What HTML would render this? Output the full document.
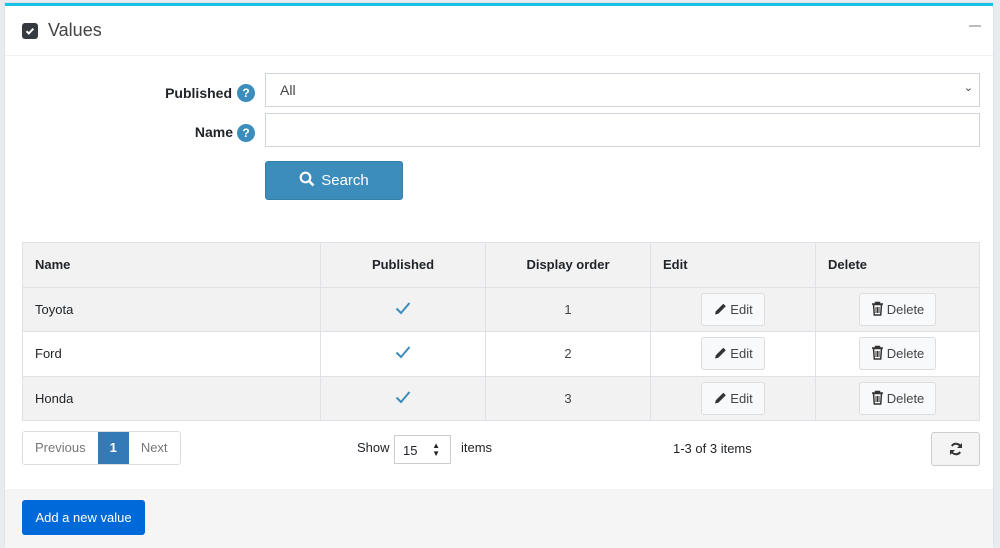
<!DOCTYPE html>
<html><head><style>
*{box-sizing:border-box;margin:0;padding:0}
body{width:1000px;height:548px;background:#e9ecef;font-family:"Liberation Sans",sans-serif;font-size:14px;color:#212529;position:relative;overflow:hidden}
.card{position:absolute;left:5px;top:3px;width:988px;height:542px;background:#fff;border-top:3px solid #17c1e8;box-shadow:0 0 1px rgba(0,0,0,.2)}
.hdr{height:50px;border-bottom:1px solid #f0f0f0;position:relative}
.cb{position:absolute;left:17px;top:17px;width:16px;height:16px;background:#343a40;border-radius:3px}
.ttl{position:absolute;left:43px;top:14px;font-size:18px;color:#444}
.min{position:absolute;right:12px;top:19px;width:12px;height:2px;background:#bbb}
.lbl{position:absolute;font-weight:bold;font-size:14px;text-align:right;right:760px}
.q{position:absolute;width:18px;height:18px;border-radius:50%;background:#3c8dbc;color:#fff;font-size:12px;font-weight:bold;text-align:center;line-height:18px}
.inp{position:absolute;left:260px;width:715px;height:34px;border:1px solid #ced4da;font-size:14px;padding:8px 14px;color:#444}
.btn{position:absolute;left:260px;top:155px;width:138px;height:39px;background:#3c8dbc;border:1px solid #367fa9;border-radius:3px;color:#fff;font-size:15px;line-height:37px;text-align:center}
table{position:absolute;left:17px;top:236px;border-collapse:collapse;width:958px}
td,th{border:1px solid #dee2e6;height:44.5px;padding:0 12px;font-size:13px}
th{background:#f2f2f2;text-align:left}
tr.g td{background:#f2f2f2}
.c{text-align:center;color:#444}
.sb{display:inline-block;height:33px;border:1px solid #ddd;border-radius:3px;background:#f8f9fa;line-height:31px;font-size:13px;color:#444;padding:0 11px}
.sb svg{vertical-align:-2px;margin-right:3px}
.pg{position:absolute;left:17px;top:425px;height:34px;border:1px solid #ddd;border-radius:3px;display:flex;font-size:13px;color:#777}
.pg span{line-height:32px;padding:0 12px}
.pg .a{background:#337ab7;color:#fff;font-weight:bold}
.foot{position:absolute;left:0;top:483px;width:988px;height:59px;background:#f5f5f5}
.add{position:absolute;left:17px;top:11px;width:123px;height:35px;background:#0069d9;border-radius:3px;color:#fff;font-size:13px;line-height:35px;text-align:center}
</style></head><body>
<div class="card">
<div class="hdr"><div class="cb"><svg width="16" height="16"><path d="M4.5 8.2l2.3 2.3 4.5-4.8" stroke="#fff" stroke-width="2" fill="none"/></svg></div><div class="ttl">Values</div><div class="min"></div></div>
<div class="lbl" style="top:79px;right:761px">Published</div><div class="q" style="left:232px;top:78px">?</div>
<div class="inp" style="top:67px">All<span style="position:absolute;right:6px;top:7px;font-size:11px">&#8964;</span></div>
<div class="lbl" style="top:118px">Name</div><div class="q" style="left:232px;top:118px">?</div>
<div class="inp" style="top:107px"></div>
<div class="btn"><svg width="16" height="16" style="vertical-align:-2px;margin-right:6px"><circle cx="6.5" cy="6.5" r="4.8" stroke="#fff" stroke-width="2.2" fill="none"/><path d="M10 10l4.5 4.5" stroke="#fff" stroke-width="2.6"/></svg>Search</div>
<table>
<tr><th style="width:298px">Name</th><th style="width:165px;text-align:center">Published</th><th style="width:165px;text-align:center">Display order</th><th style="width:165px">Edit</th><th>Delete</th></tr>
<tr class="g"><td>Toyota</td><td class="c"><svg width="16" height="14"><path d="M1.5 7.5l4.5 4.5 8.5-10" stroke="#3c8dbc" stroke-width="2" fill="none"/></svg></td><td class="c">1</td><td class="c"><span class="sb"><svg width="14" height="14"><path d="M2 12.5l.8-3.3 7.5-7.5 2.5 2.5-7.5 7.5z" fill="#333"/></svg>Edit</span></td><td class="c"><span class="sb"><svg width="13" height="15"><path d="M1 3h11M4.5 3V1.5h4V3M2.5 3.5l.8 10.5h6.4l.8-10.5z" stroke="#333" stroke-width="1.5" fill="none"/><path d="M5 6v6M6.5 6v6M8 6v6" stroke="#333"/></svg>Delete</span></td></tr>
<tr><td>Ford</td><td class="c"><svg width="16" height="14"><path d="M1.5 7.5l4.5 4.5 8.5-10" stroke="#3c8dbc" stroke-width="2" fill="none"/></svg></td><td class="c">2</td><td class="c"><span class="sb"><svg width="14" height="14"><path d="M2 12.5l.8-3.3 7.5-7.5 2.5 2.5-7.5 7.5z" fill="#333"/></svg>Edit</span></td><td class="c"><span class="sb"><svg width="13" height="15"><path d="M1 3h11M4.5 3V1.5h4V3M2.5 3.5l.8 10.5h6.4l.8-10.5z" stroke="#333" stroke-width="1.5" fill="none"/><path d="M5 6v6M6.5 6v6M8 6v6" stroke="#333"/></svg>Delete</span></td></tr>
<tr class="g"><td>Honda</td><td class="c"><svg width="16" height="14"><path d="M1.5 7.5l4.5 4.5 8.5-10" stroke="#3c8dbc" stroke-width="2" fill="none"/></svg></td><td class="c">3</td><td class="c"><span class="sb"><svg width="14" height="14"><path d="M2 12.5l.8-3.3 7.5-7.5 2.5 2.5-7.5 7.5z" fill="#333"/></svg>Edit</span></td><td class="c"><span class="sb"><svg width="13" height="15"><path d="M1 3h11M4.5 3V1.5h4V3M2.5 3.5l.8 10.5h6.4l.8-10.5z" stroke="#333" stroke-width="1.5" fill="none"/><path d="M5 6v6M6.5 6v6M8 6v6" stroke="#333"/></svg>Delete</span></td></tr>
</table>
<div class="pg"><span>Previous</span><span class="a">1</span><span>Next</span></div>
<div style="position:absolute;left:352px;top:434px;font-size:13px">Show</div>
<div style="position:absolute;left:389px;top:429px;width:57px;height:29px;border:1px solid #ccc;font-size:13px;padding:7px 8px">15<span style="position:absolute;right:10px;top:6px;font-size:8px;line-height:8px">&#9650;<br>&#9660;</span></div>
<div style="position:absolute;left:456px;top:434px;font-size:13px">items</div>
<div style="position:absolute;left:668px;top:435px;font-size:13px">1-3 of 3 items</div>
<div style="position:absolute;left:926px;top:426px;width:49px;height:34px;border:1px solid #ccc;border-radius:3px;background:#f4f4f4;text-align:center;padding-top:9px"><svg width="14" height="14"><path d="M12 5.5A5.2 5.2 0 0 0 2.8 4M2 8.5a5.2 5.2 0 0 0 9.2 1.5" stroke="#333" stroke-width="2" fill="none"/><path d="M13 1v5H8zM1 13V8h5z" fill="#333"/></svg></div>
<div class="foot"><div class="add">Add a new value</div></div>
</div>
</body></html>
